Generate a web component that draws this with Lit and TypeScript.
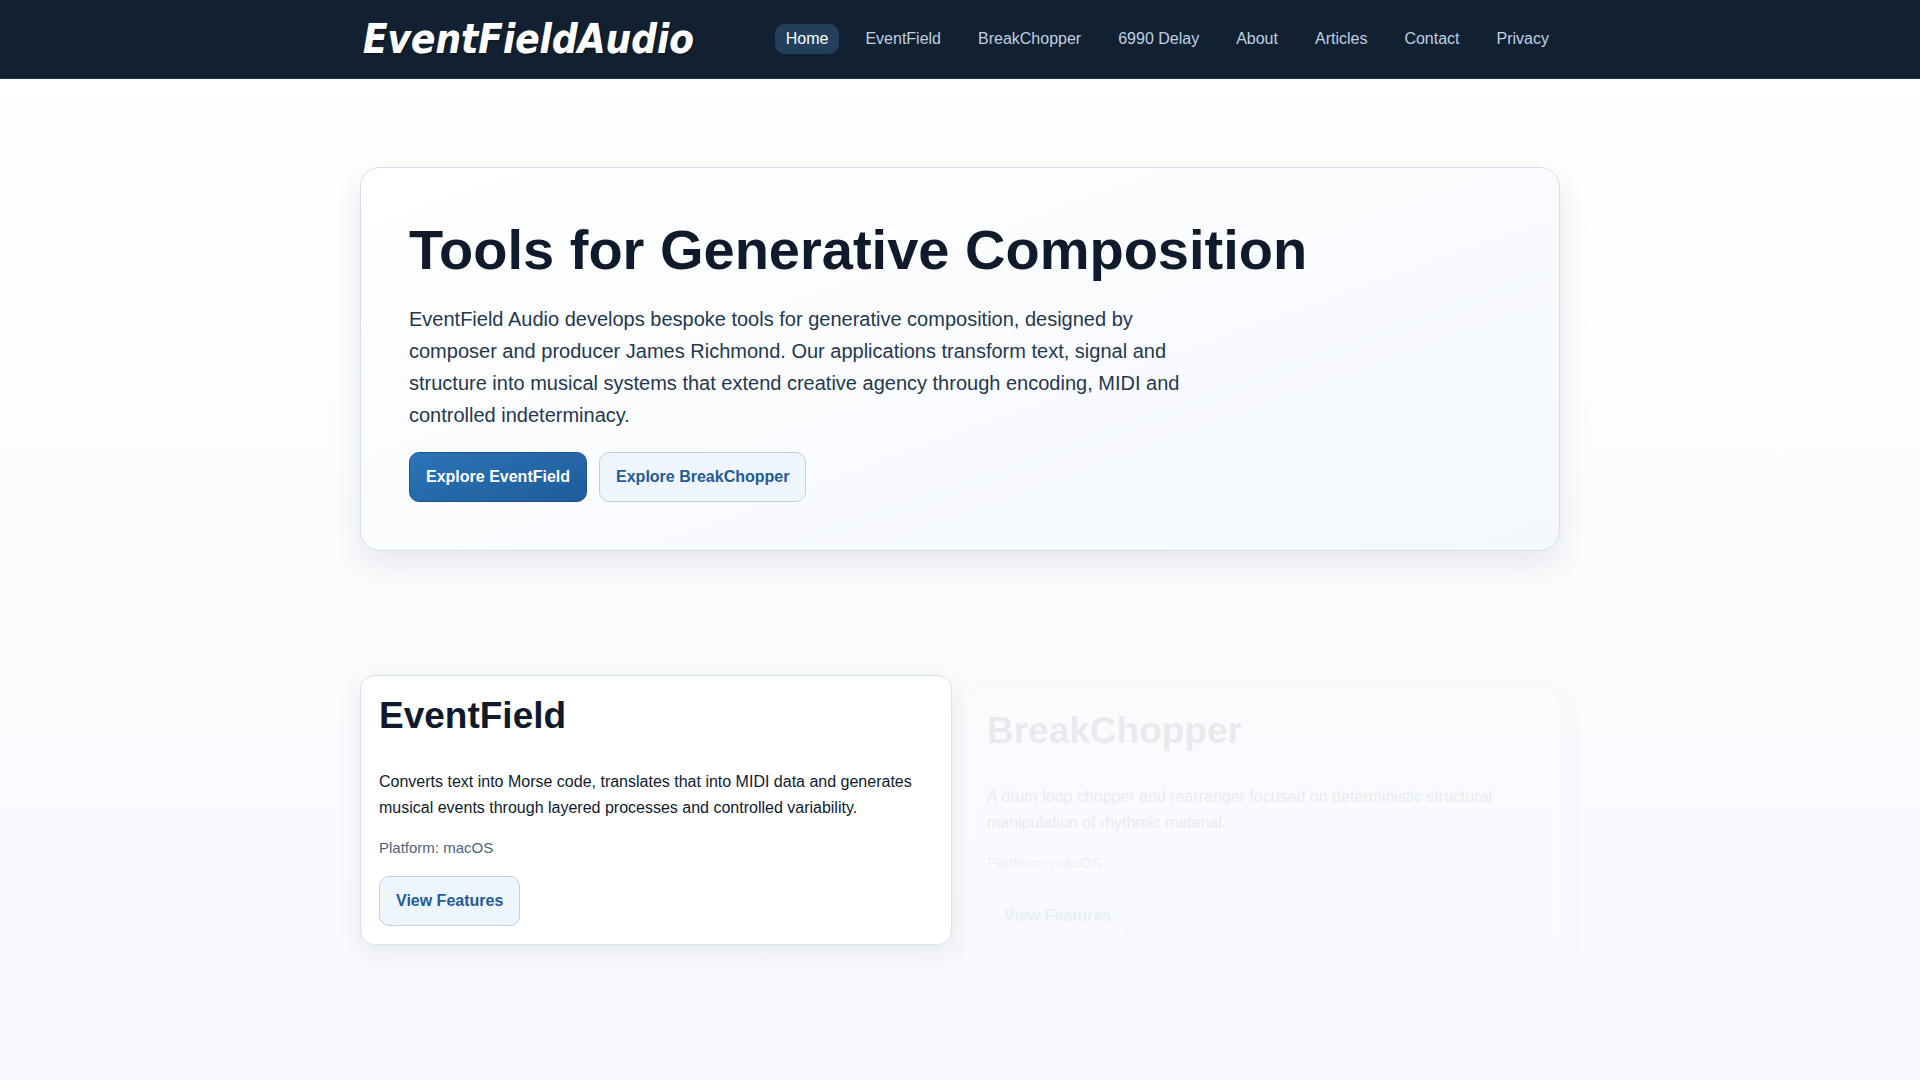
import { LitElement, html, css } from "lit";
import { customElement, property } from "lit/decorators.js";
import { classMap } from "lit/directives/class-map.js";

const links = [
  "Home",
  "EventField",
  "BreakChopper",
  "6990 Delay",
  "About",
  "Articles",
  "Contact",
  "Privacy",
];

const button = css`
  .button {
    display: inline-block;
    padding: 11px 16px;
    border: 1px solid #bcd0e6;
    border-radius: 10px;
    background: #eef5fd;
    color: #1f5c99;
    font-weight: 700;
    line-height: 26px;
    text-decoration: none;
  }
  .primary {
    border-color: #1d5490;
    background: linear-gradient(160deg, #2b74b8, #1f5c99);
    color: #ffffff;
  }
`;

@customElement("product-card")
export class ProductCard extends LitElement {
  @property() name = "";
  @property() description = "";
  @property() platform = "";

  static styles = [
    button,
    css`
      :host {
        display: block;
        padding: 18px;
        border: 1px solid #d8e2ee;
        border-radius: 14px;
        background: #ffffff;
        box-shadow: 0 8px 24px rgba(15, 40, 70, 0.08);
      }
      .title {
        margin: 0 0 32px;
        font-size: 37px;
        line-height: 43px;
        color: #0f1b2d;
      }
      .description {
        margin: 0 0 14px;
      }
      .platform {
        margin: 0 0 16px;
        font-size: 15px;
        line-height: 25px;
        color: #4f6479;
      }
      .button {
        vertical-align: top;
      }
    `,
  ];

  render() {
    return html`
      <h2 class="title">${this.name}</h2>
      <p class="description">${this.description}</p>
      <p class="platform">Platform: ${this.platform}</p>
      <a class="button" href="#features">View Features</a>
    `;
  }
}

@customElement("app-root")
export class AppRoot extends LitElement {
  static styles = [
    button,
    css`
      :host {
        display: block;
        box-sizing: border-box;
        min-height: 100vh;
        background: linear-gradient(180deg, #ffffff 0%, #f7f9fd 100%);
        color: #0f1b2d;
        font-family: "Liberation Sans", Arial, sans-serif;
        font-size: 16px;
        line-height: 26px;
      }
      .header {
        border-bottom: 1px solid #17375a;
        background: #122131;
      }
      .container {
        box-sizing: border-box;
        max-width: 1200px;
        margin: 0 auto;
      }
      .bar {
        display: flex;
        align-items: center;
        justify-content: space-between;
        padding: 14px 0;
      }
      .logo {
        padding: 0 3px;
        font-family: "DejaVu Sans Condensed", "DejaVu Sans", sans-serif;
        font-size: 40px;
        font-style: italic;
        font-weight: 700;
        line-height: 50px;
        color: #ffffff;
        text-decoration: none;
        text-shadow:
          0 0 1px rgba(255, 255, 255, 0.5),
          1px 1px 2px rgba(0, 0, 0, 0.7);
      }
      .nav {
        display: flex;
        gap: 15px;
      }
      .link {
        padding: 2px 11px;
        border-radius: 10px;
        color: #bfd0e2;
        text-decoration: none;
      }
      .current {
        background: #233f5c;
        color: #ffffff;
      }
      .hero {
        margin-top: 88px;
        padding: 48px;
        border: 1px solid #d3dfee;
        border-radius: 20px;
        background: linear-gradient(160deg, #ffffff 0%, #f4f8fd 100%);
        box-shadow: 0 12px 32px rgba(15, 27, 45, 0.09);
      }
      .headline {
        margin: 0 0 20px;
        font-size: 56px;
        line-height: 67px;
      }
      .intro {
        max-width: 800px;
        margin: 0 0 21px;
        font-size: 20px;
        line-height: 32px;
        color: #24384e;
      }
      .actions {
        display: flex;
        flex-wrap: wrap;
        gap: 12px;
      }
      .products {
        display: grid;
        grid-template-columns: 1fr 1fr;
        gap: 16px;
        margin-top: 124px;
      }
      .entering {
        opacity: 0.07;
        transform: translateY(15px);
      }
    `,
  ];

  render() {
    return html`
      <header class="header">
        <div class="container bar">
          <a class="logo" href="#home">EventFieldAudio</a>
          <nav class="nav" aria-label="Main">
            ${links.map(
              (label, i) =>
                html`<a class=${classMap({ link: true, current: i === 0 })} href="#">${label}</a>`,
            )}
          </nav>
        </div>
      </header>
      <main>
        <section class="container hero">
          <h1 class="headline">Tools for Generative Composition</h1>
          <p class="intro">
            EventField Audio develops bespoke tools for generative composition, designed by composer
            and producer James Richmond. Our applications transform text, signal and structure into
            musical systems that extend creative agency through encoding, MIDI and controlled
            indeterminacy.
          </p>
          <div class="actions">
            <a class="button primary" href="#eventfield">Explore EventField</a>
            <a class="button" href="#breakchopper">Explore BreakChopper</a>
          </div>
        </section>
        <section class="container products">
          <product-card
            name="EventField"
            description="Converts text into Morse code, translates that into MIDI data and generates musical events through layered processes and controlled variability."
            platform="macOS"
          ></product-card>
          <product-card
            class="entering"
            name="BreakChopper"
            description="A drum loop chopper and rearranger focused on deterministic structural manipulation of rhythmic material."
            platform="macOS"
          ></product-card>
        </section>
      </main>
    `;
  }
}
